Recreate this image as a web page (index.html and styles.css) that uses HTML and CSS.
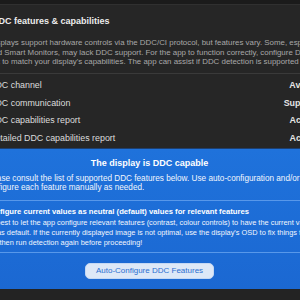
FILE: index.html
```html
<!DOCTYPE html>
<html>
<head>
<meta charset="utf-8">
<link rel="stylesheet" href="styles.css">
</head>
<body>
<div class="topbar"></div>
<div class="page">
  <h2 class="section-title">DDC features &amp; capabilities</h2>
  <p class="desc">Displays support hardware controls via the DDC/CI protocol, but features vary. Some, especially<br>and Smart Monitors, may lack DDC support. For the app to function correctly, configure DDC features<br>out to match your display's capabilities. The app can assist if DDC detection is supported by the display.</p>
  <div class="rows">
    <div class="row"><span class="label">DDC channel</span><span class="value">Available</span></div>
    <div class="row"><span class="label">DDC communication</span><span class="value">Supported</span></div>
    <div class="row"><span class="label">DDC capabilities report</span><span class="value">Acquired</span></div>
    <div class="row"><span class="label">Detailed DDC capabilities report</span><span class="value">Acquired</span></div>
  </div>
</div>
<div class="notice">
  <div class="notice-inner">
    <div class="notice-title">The display is DDC capable</div>
    <p class="notice-text">Please consult the list of supported DDC features below. Use auto-configuration and/or<br>configure each feature manually as needed.</p>
    <div class="notice-sep"></div>
    <div class="notice-head">Configure current values as neutral (default) values for relevant features</div>
    <p class="notice-text small">It's best to let the app configure relevant features (contrast, colour controls) to have the current values<br>set as default. If the currently displayed image is not optimal, use the display's OSD to fix things first,<br>and then run detection again before proceeding!</p>
    <div class="notice-sep low"></div>
    <div class="notice-actions"><button class="btn">Auto-Configure DDC Features</button></div>
  </div>
</div>
<div class="footer"></div>
</body>
</html>
```
FILE: styles.css
```css
html, body {
  margin: 0;
  padding: 0;
  overflow: hidden;
  width: 300px;
  height: 300px;
}
body {
  background: #262626;
  font-family: "Liberation Sans", Arial, sans-serif;
  color: #dedede;
}
.topbar {
  height: 4px;
  background: #1b1b1b;
  border-bottom: 1px solid #303030;
}
.page {
  margin-left: -11px;
  width: 339px;
}
.section-title {
  margin: 10px 0 0 3px;
  font-size: 9px;
  line-height: 12px;
  font-weight: bold;
  color: #ececec;
  white-space: nowrap;
}
.desc {
  margin: 11px 0 0 0;
  font-size: 7.9px;
  line-height: 9.5px;
  color: #a8a8a8;
  white-space: nowrap;
  padding-bottom: 6px;
  border-bottom: 1px solid #3a3a3a;
}
.rows {
  padding-top: 3px;
}
.row {
  display: flex;
  justify-content: space-between;
  align-items: center;
  height: 17.6px;
  font-size: 8.9px;
  white-space: nowrap;
}
.label {
  color: #dcdcdc;
}
.value {
  font-weight: bold;
  color: #e4e4e4;
}
.notice {
  margin-top: 1px;
  border-top: 1px solid #1d3f70;
  background: linear-gradient(#1f72db, #1b68d2);
  color: #ffffff;
  padding: 9px 0 10px 0;
}
.notice-inner {
  margin-left: -15px;
  width: 329px;
}
.notice-title {
  text-align: center;
  font-size: 9px;
  font-weight: bold;
  line-height: 11px;
}
.notice-text {
  margin: 5px 0 0 0;
  font-size: 8.2px;
  line-height: 9.5px;
  white-space: nowrap;
  color: #f2f6fd;
}
.notice-text.small {
  margin-top: 1px;
  font-size: 7.4px;
  line-height: 10px;
}
.notice-sep {
  height: 1px;
  background: #5898ea;
  margin: 7px 0 6px 0;
  width: 400px;
}
.notice-sep.low {
  margin: 4px 0 0 0;
}
.notice-head {
  font-size: 7.7px;
  font-weight: bold;
  line-height: 10px;
  white-space: nowrap;
}
.notice-actions {
  display: flex;
  justify-content: center;
  margin-top: 10px;
}
.btn {
  font-family: "Liberation Sans", Arial, sans-serif;
  font-size: 8px;
  height: 16px;
  padding: 0 10px;
  border-radius: 5px;
  border: 1px solid #c4d8f4;
  background: #dde8f7;
  color: #2c6fd0;
  white-space: nowrap;
}
.footer {
  height: 20px;
  background: #232323;
}
```
